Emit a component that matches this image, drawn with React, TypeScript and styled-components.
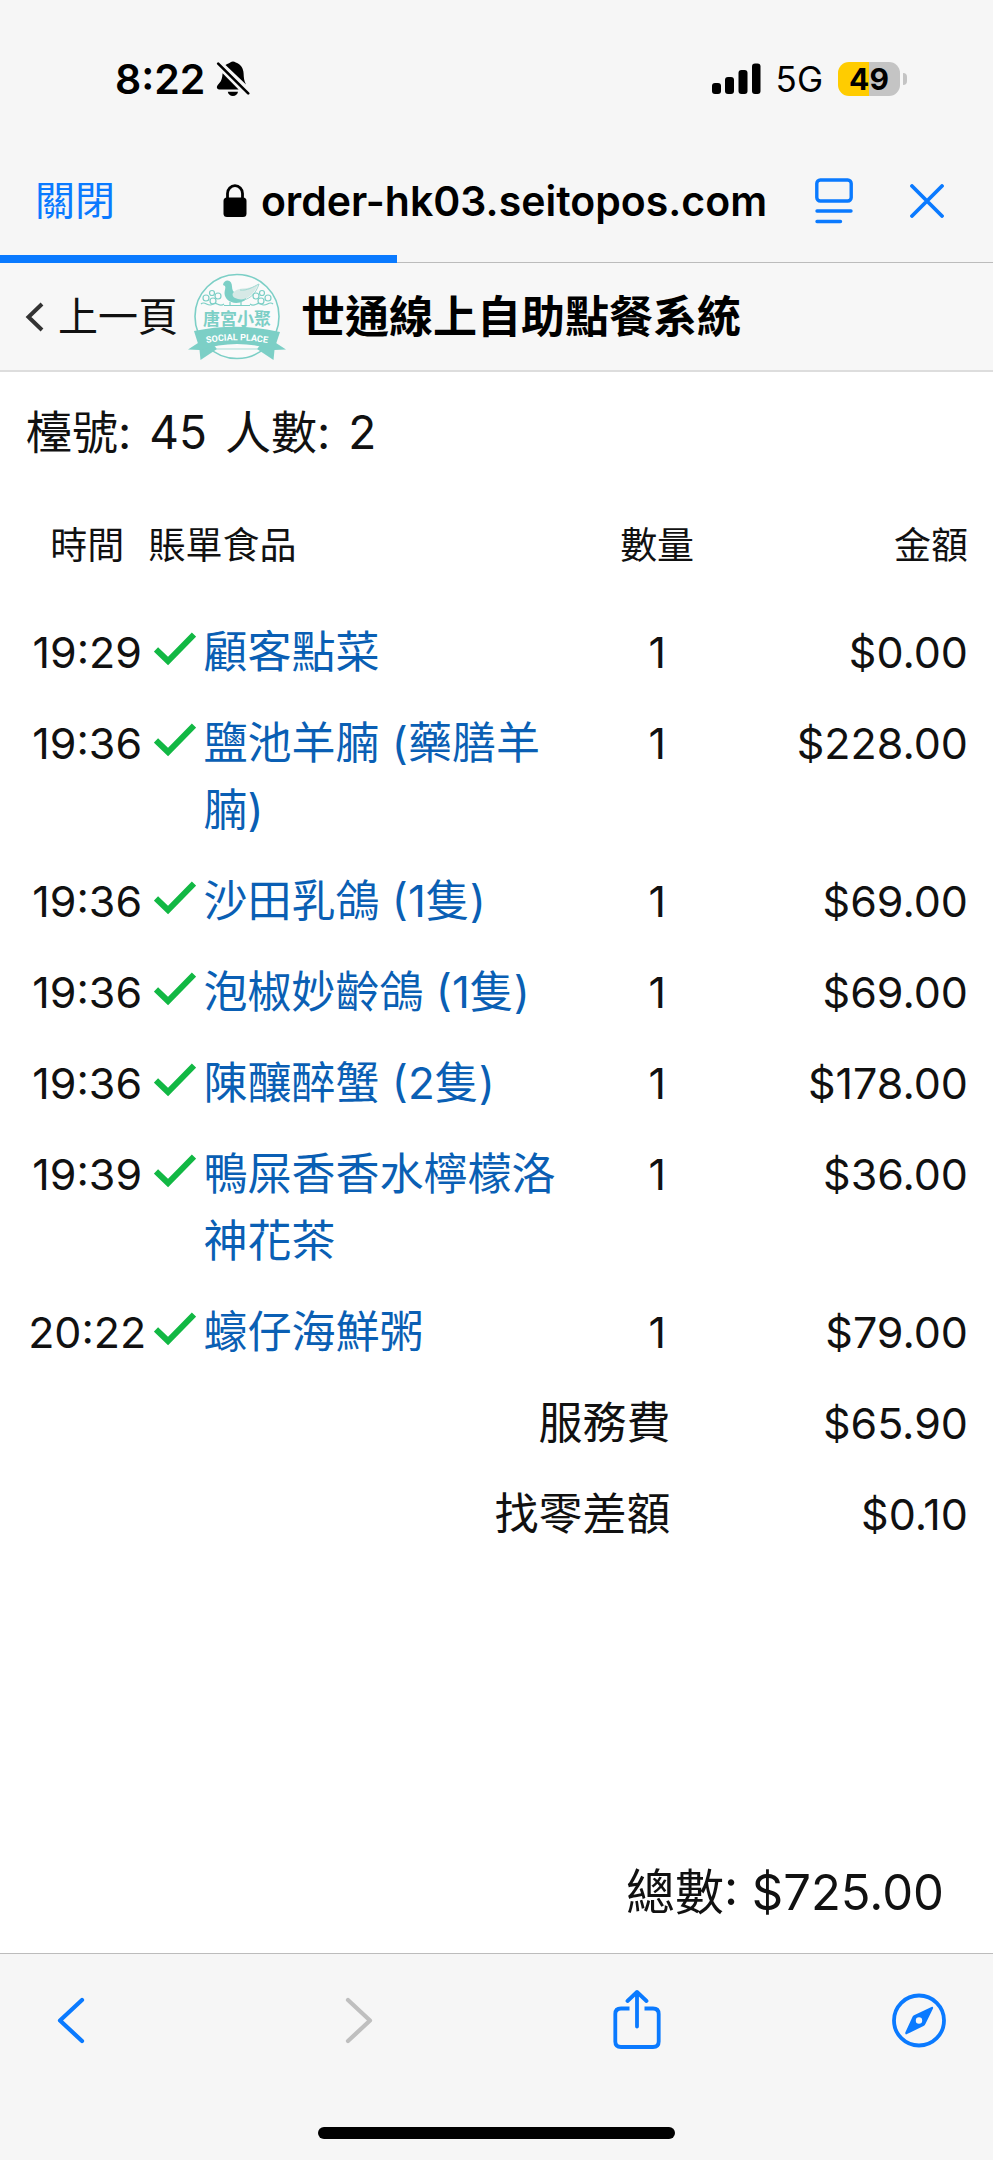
import React from "react";
import styled, { createGlobalStyle } from "styled-components";

interface BillItem {
  time: string;
  name: string;
  qty: number;
  amount: string;
}

const items: BillItem[] = [
  { time: "19:29", name: "顧客點菜", qty: 1, amount: "$0.00" },
  { time: "19:36", name: "鹽池羊腩 (藥膳羊腩)", qty: 1, amount: "$228.00" },
  { time: "19:36", name: "沙田乳鴿 (1隻)", qty: 1, amount: "$69.00" },
  { time: "19:36", name: "泡椒妙齡鴿 (1隻)", qty: 1, amount: "$69.00" },
  { time: "19:36", name: "陳釀醉蟹 (2隻)", qty: 1, amount: "$178.00" },
  { time: "19:39", name: "鴨屎香香水檸檬洛神花茶", qty: 1, amount: "$36.00" },
  { time: "20:22", name: "蠔仔海鮮粥", qty: 1, amount: "$79.00" },
];

const charges = [
  { label: "服務費", amount: "$65.90" },
  { label: "找零差額", amount: "$0.10" },
];

function App() {
  return (
    <Screen>
      <GlobalStyle />
      <StatusBar />
      <AddressBar />
      <ProgressTrack>
        <ProgressFill style={{ width: "40%" }} />
      </ProgressTrack>
      <PageHeader />
      <Main>
        <TableInfo>
          <span>檯號:</span>
          <span>45</span>
          <span>人數:</span>
          <span>2</span>
        </TableInfo>
        <Bill />
        <Total>總數: $725.00</Total>
      </Main>
      <BottomBar />
    </Screen>
  );
}

export default App;

//status bar
const StatusBar = () => (
  <StatusWrapper>
    <StatusGroup $gap={11}>
      <Clock>8:22</Clock>
      <svg width="34" height="36" viewBox="0 0 34 36" aria-hidden="true">
        <path d="M9.500 4C12 2.600 13.400 2.200 14.200 1.600Q17 -0.600 19.800 1.600C25 3.600 27.400 7.600 27.600 12.500C27.800 17 28 19.500 30 23.600Z" />
        <path d="M6.600 12.200C6.200 17 5.600 19.500 3.400 22C1 24.600 0.600 25.600 1 27Q1.400 28.400 3 28.400H22.600Z" />
        <path d="M11.800 30.800H22C21.600 33.400 19.600 35 16.900 35S12.200 33.400 11.800 30.800Z" />
        <path d="M2.200 2.600L32.200 32.400" stroke="#000" strokeWidth="2.600" strokeLinecap="round" />
      </svg>
    </StatusGroup>
    <StatusGroup $gap={15}>
      <svg width="49" height="32" viewBox="0 0 49 32" aria-hidden="true">
        <rect x="0" y="20" width="9" height="11" rx="3" />
        <rect x="13" y="14" width="9" height="17" rx="3" />
        <rect x="26.500" y="7" width="9" height="24" rx="3" />
        <rect x="40" y="0.500" width="8.500" height="30.500" rx="3" />
      </svg>
      <Network>5G</Network>
      <BatteryWrapper>
        <Battery>49</Battery>
        <BatteryTip />
      </BatteryWrapper>
    </StatusGroup>
  </StatusWrapper>
);

const GlobalStyle = createGlobalStyle`
  * {
    box-sizing: border-box;
  }
  body {
    margin: 0;
    background-color: #ffffff;
    color: #111111;
    font-family: Inter, "Noto Sans CJK TC", sans-serif;
  }
  svg {
    display: block;
    flex-shrink: 0;
  }
`;

const Screen = styled.div`
  display: flex;
  flex-direction: column;
  min-height: 100vh;
`;

const StatusWrapper = styled.div`
  display: flex;
  justify-content: space-between;
  align-items: center;
  height: 158px;
  padding: 0 86px 0 115px;
  background-color: #f6f6f6;
  color: #000000;
`;

const StatusGroup = styled.div<{ $gap: number }>`
  display: flex;
  align-items: center;
  gap: ${({ $gap }) => $gap}px;
`;

const Clock = styled.span`
  font-size: 41px;
  font-weight: 600;
`;

const Network = styled.span`
  font-size: 35px;
`;

const BatteryWrapper = styled.div`
  display: flex;
  align-items: center;
  gap: 3px;
`;

const Battery = styled.div`
  width: 62px;
  border-radius: 11px;
  background: linear-gradient(to right, #ffcc00 50%, #c4c4c4 50%);
  font-size: 30px;
  font-weight: 700;
  line-height: 34px;
  text-align: center;
`;

const BatteryTip = styled.div`
  width: 4px;
  height: 12px;
  border-radius: 0 4px 4px 0;
  background-color: #c4c4c4;
`;

//address bar
const AddressBar = () => (
  <AddressWrapper>
    <CloseButton type="button">關閉</CloseButton>
    <Address>
      <svg width="24" height="34" viewBox="0 0 24 34" aria-hidden="true">
        <rect x="0.500" y="13.500" width="23" height="19.500" rx="3.500" />
        <path d="M4.500 15V9.500A7.500 7.800 0 0 1 19.500 9.500V15" fill="none" stroke="#000" strokeWidth="2.800" />
      </svg>
      order-hk03.seitopos.com
    </Address>
    <AddressActions>
      <IconButton type="button" aria-label="閱讀器">
        <svg width="38" height="46" viewBox="0 0 38 46" fill="none" stroke="#0a7aff" strokeWidth="3.400" strokeLinecap="round">
          <rect x="1.800" y="2" width="34.400" height="21" rx="3.500" />
          <path d="M2 33H36M2 43.500H25.500" />
        </svg>
      </IconButton>
      <IconButton type="button" aria-label="停止載入">
        <svg width="34" height="34" viewBox="0 0 34 34" fill="none" stroke="#0a7aff" strokeWidth="3.800" strokeLinecap="round">
          <path d="M2 2L32 32M32 2L2 32" />
        </svg>
      </IconButton>
    </AddressActions>
  </AddressWrapper>
);

const AddressWrapper = styled.div`
  display: flex;
  justify-content: space-between;
  align-items: center;
  height: 97px;
  padding: 0 49px 12px 35px;
  background-color: #f6f6f6;
`;

const PlainButton = styled.button`
  padding: 0;
  border: none;
  background: none;
  font-family: inherit;
`;

const CloseButton = styled(PlainButton)`
  color: #0a7aff;
  font-size: 40px;
  line-height: 48px;
`;

const IconButton = styled(PlainButton)`
  display: flex;
  justify-content: center;
  align-items: center;
`;

const Address = styled.div`
  display: flex;
  align-items: center;
  gap: 14px;
  margin-left: 60px;
  color: #000000;
  font-size: 41px;
  font-weight: 600;
  line-height: 48px;
`;

const AddressActions = styled.div`
  display: flex;
  align-items: center;
  gap: 57px;
`;

const ProgressTrack = styled.div`
  height: 8px;
  border-bottom: 1px solid #bcbcbc;
  background-color: #f6f6f6;
`;

const ProgressFill = styled.div`
  height: 8px;
  background-color: #0a7aff;
`;

//page header
const PageHeader = () => (
  <HeaderWrapper>
    <BackLink href="#">
      <svg width="20" height="32" viewBox="0 0 20 32" fill="none" stroke="#333" strokeWidth="4">
        <path d="M17 3L3.500 16L17 29" />
      </svg>
      上一頁
    </BackLink>
    <Logo />
    <Title>世通線上自助點餐系統</Title>
  </HeaderWrapper>
);

const Logo = () => (
  <svg width="98" height="88" viewBox="0 0 98 88" role="img" aria-label="唐宮小聚 SOCIAL PLACE">
    <circle cx="49" cy="43.500" r="42" fill="#fafafa" stroke="#7ccfc6" strokeWidth="1.600" />
    <path
      d="M35 12C35.500 7 41 6 43 9.500C44.500 12 43.500 15 45 18C48 21 52 19 56 22C60 25 58 28 52 29.500C43 31.500 36.500 26 36.500 20C36.500 17 38 15 37 13Z"
      fill="#7ccfc6"
    />
    <path d="M45 20C50 13 59 18 70 11.500C66 22 58 28 50 26C46 25 43.500 23 45 20Z" fill="#d6e9e6" />
    <path d="M52 17C59 18 65 14 71 11C68 20 63 25 56 27" fill="none" stroke="#9dd9d2" strokeWidth="1" />
    <g fill="none" stroke="#7ccfc6" strokeWidth="1.200">
      <path d="M42 29V32M53 29V32M36 32.500H62" />
      <circle cx="24" cy="20" r="2.500" />
      <circle cx="30" cy="23" r="3" />
      <circle cx="18" cy="25" r="3" />
      <circle cx="25" cy="28" r="3" />
      <path d="M13 31C17 27 20 35 25 31C29 28 31 35 36 31" />
      <circle cx="74" cy="20" r="2.500" />
      <circle cx="68" cy="23" r="3" />
      <circle cx="80" cy="25" r="3" />
      <circle cx="73" cy="28" r="3" />
      <path d="M85 31C81 27 78 35 73 31C69 28 67 35 62 31" />
    </g>
    <LogoName x="49" y="52" textAnchor="middle">
      唐宮小聚
    </LogoName>
    <path d="M10 70L0 76.500L11.500 77L12.500 87L29 76L24 70ZM88 70L98 76.500L86.500 77L85.500 87L69 76L74 70Z" fill="#7ccfc6" />
    <path d="M6 58Q49 49 92 59L86 77Q49 65 12 77Z" fill="#7ccfc6" />
    <path d="M28 76H70" stroke="#a9ddd7" strokeWidth="1" />
    <path id="ribbon-line" d="M12 71.500Q49 63 86 71.500" fill="none" />
    <RibbonText textAnchor="middle">
      <textPath href="#ribbon-line" startOffset="50%">
        SOCIAL PLACE
      </textPath>
    </RibbonText>
  </svg>
);

const LogoName = styled.text`
  fill: #7ccfc6;
  font-size: 17px;
  font-weight: 700;
`;

const RibbonText = styled.text`
  fill: #ffffff;
  font-family: Roboto, "Liberation Sans", sans-serif;
  font-size: 9px;
  font-weight: 700;
`;

const HeaderWrapper = styled.header`
  display: flex;
  align-items: center;
  height: 109px;
  padding: 0 25px;
  border-bottom: 2px solid #dddddd;
  background-color: #f7f7f7;
`;

const BackLink = styled.a`
  display: flex;
  align-items: center;
  gap: 13px;
  margin-right: 10px;
  color: #111111;
  font-size: 40px;
  line-height: 48px;
  text-decoration: none;
`;

const Title = styled.h1`
  margin: 0 0 0 15px;
  color: #000000;
  font-size: 44px;
  font-weight: 700;
  line-height: 48px;
`;

//bill
const Bill = () => (
  <BillTable>
    <colgroup>
      <Column $width="13%" />
      <Column $width="46%" />
      <Column $width="16%" />
      <Column $width="25%" />
    </colgroup>
    <thead>
      <tr>
        <HeadCell $align="center">時間</HeadCell>
        <HeadCell $align="left">賬單食品</HeadCell>
        <HeadCell $align="center">數量</HeadCell>
        <HeadCell $align="right">金額</HeadCell>
      </tr>
    </thead>
    <tbody>
      {items.map((item, index) => (
        <tr key={index}>
          <NumberCell $align="center">{item.time}</NumberCell>
          <Cell $align="left">
            <Food>
              <CheckIcon />
              <FoodLink href="#">{item.name}</FoodLink>
            </Food>
          </Cell>
          <NumberCell $align="center">{item.qty}</NumberCell>
          <NumberCell $align="right">{item.amount}</NumberCell>
        </tr>
      ))}
      {charges.map((charge) => (
        <tr key={charge.label}>
          <ChargeLabel $align="right" colSpan={3}>
            {charge.label}
          </ChargeLabel>
          <NumberCell $align="right">{charge.amount}</NumberCell>
        </tr>
      ))}
    </tbody>
  </BillTable>
);

const CheckIcon = () => (
  <svg width="42" height="60" viewBox="0 0 42 60" fill="none" stroke="#12b844" strokeWidth="6" aria-hidden="true">
    <path d="M2 30.500L14 42L40 15.500" />
  </svg>
);

const Main = styled.main`
  display: flex;
  flex: 1;
  flex-direction: column;
  padding: 27px 25px 27px 26px;
`;

const TableInfo = styled.div`
  display: flex;
  gap: 18px;
  font-size: 46px;
  line-height: 67px;
`;

const BillTable = styled.table`
  width: 100%;
  margin-top: 53px;
  border-collapse: collapse;
  table-layout: fixed;
`;

const Column = styled.col<{ $width: string }>`
  width: ${({ $width }) => $width};
`;

interface CellProps {
  $align: "left" | "center" | "right";
}

const HeadCell = styled.th<CellProps>`
  padding: 0 0 34px;
  font-size: 37px;
  font-weight: 400;
  line-height: 54px;
  text-align: ${({ $align }) => $align};
`;

const Cell = styled.td<CellProps>`
  padding: 12px 0;
  font-size: 44px;
  line-height: 67px;
  text-align: ${({ $align }) => $align};
  vertical-align: top;
`;

const NumberCell = styled(Cell)`
  font-size: 43px;
`;

const ChargeLabel = styled(Cell)`
  padding-right: 62px;
`;

const Food = styled.div`
  display: flex;
  gap: 7px;
  padding-left: 6px;
`;

const FoodLink = styled.a`
  color: #0a5fb4;
  text-decoration: none;
`;

const Total = styled.div`
  margin-top: auto;
  padding-right: 24px;
  font-size: 49px;
  line-height: 67px;
  text-align: right;
`;

//bottom bar
const BottomBar = () => (
  <BottomWrapper>
    <Actions>
      <IconButton type="button" aria-label="返回">
        <svg width="56" height="60" viewBox="0 0 56 60" fill="none" stroke="#0a7aff" strokeWidth="4.200" strokeLinecap="round" strokeLinejoin="round">
          <path d="M38 10L16 30.500L38 51" />
        </svg>
      </IconButton>
      <IconButton type="button" aria-label="前進" disabled>
        <svg width="56" height="60" viewBox="0 0 56 60" fill="none" stroke="#bfbfbf" strokeWidth="4.200" strokeLinecap="round" strokeLinejoin="round">
          <path d="M22 10L44 30.500L22 51" />
        </svg>
      </IconButton>
      <IconButton type="button" aria-label="分享">
        <svg width="56" height="60" viewBox="0 0 56 60" fill="none" stroke="#0a7aff" strokeWidth="3.800" strokeLinecap="round" strokeLinejoin="round">
          <path d="M20.500 18.500H12Q6.300 18.500 6.300 24V51.500Q6.300 57 12 57H44Q49.700 57 49.700 51.500V24Q49.700 18.500 44 18.500H35.500" strokeLinecap="butt" />
          <path d="M28 36.500V2M18.500 11L28 2L37.500 11" />
        </svg>
      </IconButton>
      <IconButton type="button" aria-label="在 Safari 開啟">
        <svg width="56" height="60" viewBox="0 0 56 60">
          <circle cx="28" cy="30.500" r="25" fill="none" stroke="#0a7aff" strokeWidth="3.800" />
          <path
            d="M41 16.800L23 25.300Q21.800 26 21.300 27.300L14.300 42.500Q14 45.100 16 44.100L32.500 36Q33.800 35.300 34.400 34L42 18.500Q42.500 16.500 41 16.800ZM28 27.300A3.200 3.200 0 1 1 28 33.700A3.200 3.200 0 1 1 28 27.300Z"
            fill="#0a7aff"
            fillRule="evenodd"
          />
        </svg>
      </IconButton>
    </Actions>
    <HomeIndicator />
  </BottomWrapper>
);

const BottomWrapper = styled.footer`
  display: flex;
  flex-direction: column;
  justify-content: space-between;
  align-items: center;
  height: 207px;
  padding: 36px 0 21px;
  border-top: 1px solid #bcbcbc;
  background-color: #f6f6f6;
`;

const Actions = styled.nav`
  display: flex;
  justify-content: space-between;
  width: 100%;
  padding: 0 46px 0 44px;
`;

const HomeIndicator = styled.div`
  width: 36%;
  height: 12px;
  border-radius: 6px;
  background-color: #000000;
`;
